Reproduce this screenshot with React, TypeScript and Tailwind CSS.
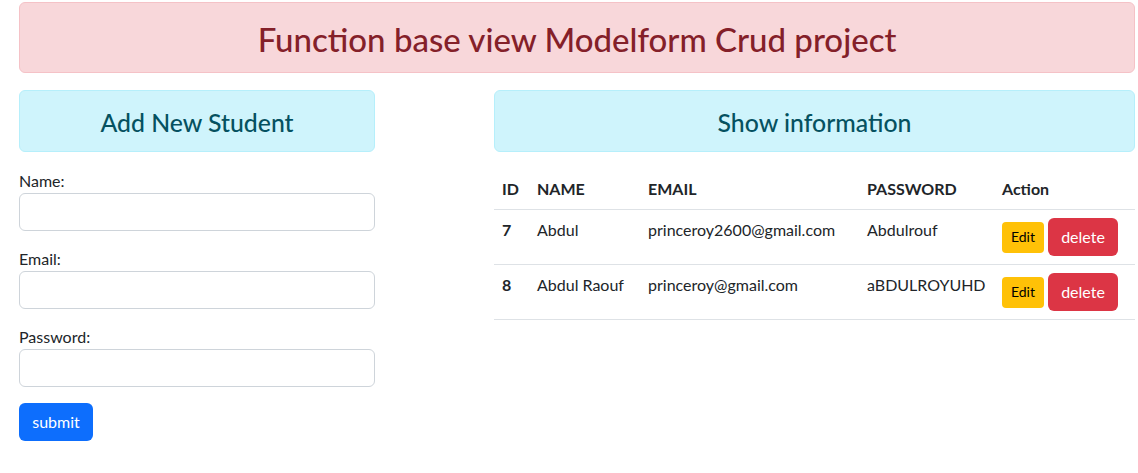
const students = [
  { id: 7, name: "Abdul", email: "princeroy2600@gmail.com", password: "Abdulrouf" },
  { id: 8, name: "Abdul Raouf", email: "princeroy@gmail.com", password: "aBDULROYUHD" },
];

function Field({ label, type = "text" }: { label: string; type?: string }) {
  return (
    <div className="flex flex-col">
      <label className="text-base leading-6">{label}</label>
      <input
        type={type}
        className="h-[38px] w-full rounded-[6px] border border-[#ced4da] bg-white px-3 outline-none"
      />
    </div>
  );
}

export default function App() {
  return (
    <div
      className="min-h-[473px] bg-white px-[19px] pt-[2px] text-[#212529]"
      style={{ fontFamily: "Lato, 'Open Sans', sans-serif" }}
    >
      <div className="flex h-[71px] w-[1116px] items-center justify-center rounded-[6px] border border-[#f5c2c7] bg-[#f8d7da] pt-[4px]">
        <h2 className="text-[33px] font-medium leading-none text-[#842029]">
          Function base view Modelform Crud project
        </h2>
      </div>

      <div className="mt-[17px] flex w-[1116px] items-start gap-[119px]">
        {/* left: form */}
        <div className="w-[356px]">
          <div className="flex h-[62px] items-center justify-center rounded-[6px] border border-[#b6effb] bg-[#cff4fc] pt-[3px]">
            <h4 className="text-[24.8px] font-medium text-[#055160]">Add New Student</h4>
          </div>
          <form className="mt-[17px] flex flex-col gap-4" onSubmit={(e) => e.preventDefault()}>
            <Field label="Name:" />
            <Field label="Email:" type="email" />
            <Field label="Password:" type="password" />
            <div>
              <button className="h-[38px] w-[74px] rounded-[6px] bg-[#0d6efd] text-base text-white">
                submit
              </button>
            </div>
          </form>
        </div>

        {/* right: table */}
        <div className="w-[641px]">
          <div className="flex h-[62px] items-center justify-center rounded-[6px] border border-[#b6effb] bg-[#cff4fc] pt-[3px]">
            <h4 className="text-[24.8px] font-medium text-[#055160]">Show information</h4>
          </div>
          <table className="mt-[17px] w-full table-fixed border-collapse text-left text-base leading-6">
            <colgroup>
              <col className="w-[35px]" />
              <col className="w-[111px]" />
              <col className="w-[219px]" />
              <col className="w-[135px]" />
              <col className="w-[141px]" />
            </colgroup>
            <thead>
              <tr className="border-b border-[#dee2e6]">
                <th className="p-2 font-bold">ID</th>
                <th className="p-2 font-bold">NAME</th>
                <th className="p-2 font-bold">EMAIL</th>
                <th className="p-2 font-bold">PASSWORD</th>
                <th className="p-2 font-bold">Action</th>
              </tr>
            </thead>
            <tbody>
              {students.map((s) => (
                <tr key={s.id} className="border-b border-[#dee2e6] align-top">
                  <th className="p-2 font-bold">{s.id}</th>
                  <td className="p-2">{s.name}</td>
                  <td className="p-2">{s.email}</td>
                  <td className="p-2">{s.password}</td>
                  <td className="p-2">
                    <div className="flex items-center gap-1">
                      <button className="h-[31px] w-[42px] rounded-[4px] bg-[#ffc107] text-sm text-black">
                        Edit
                      </button>
                      <button className="h-[38px] w-[70px] rounded-[6px] bg-[#dc3545] text-base text-white">
                        delete
                      </button>
                    </div>
                  </td>
                </tr>
              ))}
            </tbody>
          </table>
        </div>
      </div>
    </div>
  );
}
